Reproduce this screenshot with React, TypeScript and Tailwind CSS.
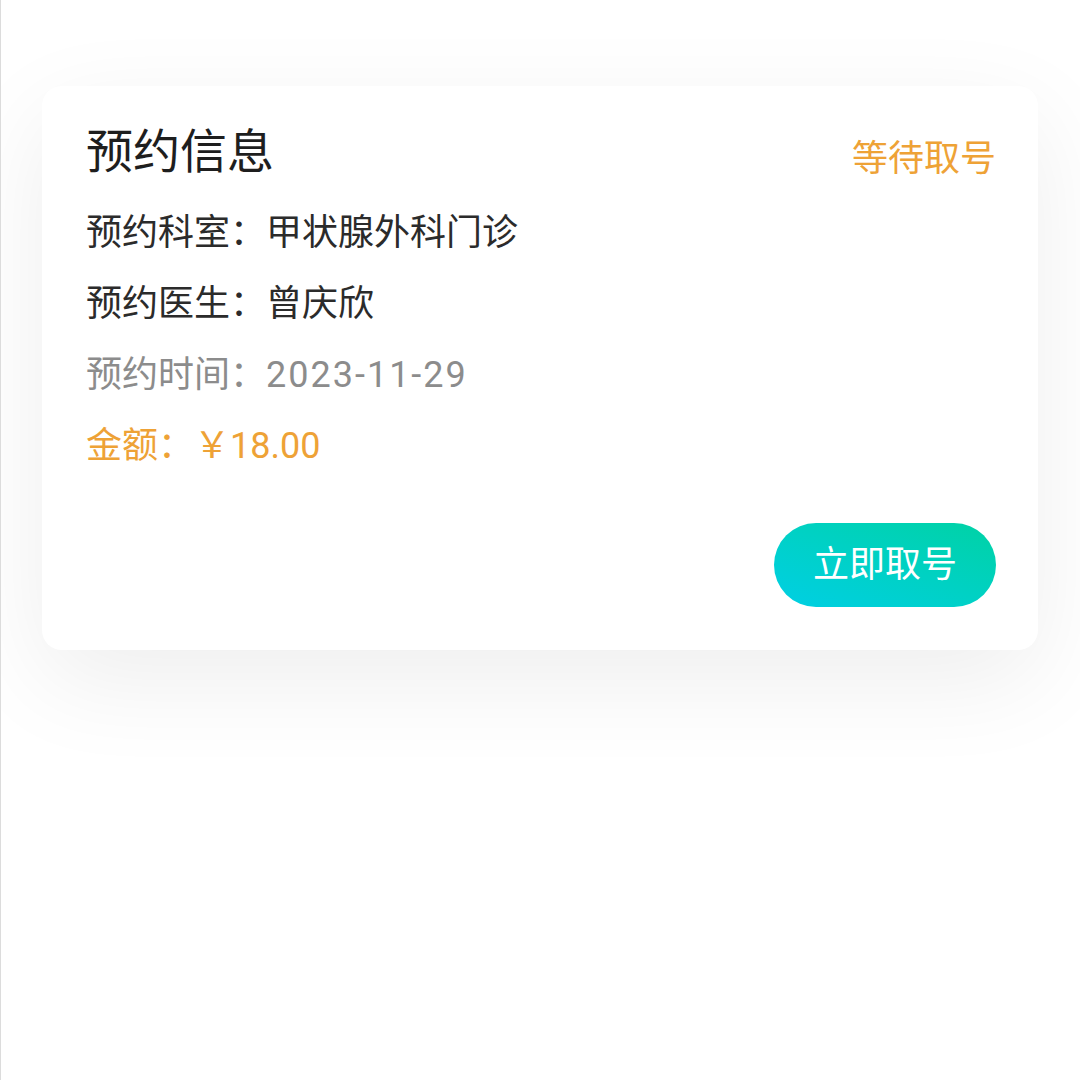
import React from "react";

export default function App() {
  const font = { fontFamily: 'Roboto, "Noto Sans CJK SC", "Noto Sans", sans-serif' };
  return (
    <div
      className="w-[1080px] h-[1080px] bg-white border-l border-[#dcdcdc] overflow-hidden"
      style={font}
    >
      <div className="pt-[86px] pl-[41px] pr-[42px]">
        <div className="bg-white rounded-[20px] h-[564px] shadow-[0_30px_100px_rgba(0,0,0,0.07)] pl-[44px] pr-[42px] flex flex-col">
          <div className="flex items-center justify-between h-[56px] mt-[38px]">
            <span className="text-[47px] leading-[56px] text-[#1e1e1e]">预约信息</span>
            <span className="text-[36px] leading-[44px] text-[#eea236] mt-[14px]">等待取号</span>
          </div>
          <div className="mt-[31px] flex flex-col gap-[27px] text-[36px] leading-[44px]">
            <div className="flex text-[#2b2b2b]">
              <span>预约科室：</span>
              <span>甲状腺外科门诊</span>
            </div>
            <div className="flex text-[#2b2b2b]">
              <span>预约医生：</span>
              <span>曾庆欣</span>
            </div>
            <div className="flex text-[#8c8c8c]">
              <span>预约时间：</span>
              <span className="tracking-[2px]">2023-11-29</span>
            </div>
            <div className="flex text-[#eea236]">
              <span>金额：</span>
              <span>￥18.00</span>
            </div>
          </div>
          <div className="flex justify-end mt-[55px]">
            <button className="w-[222px] h-[84px] rounded-full bg-gradient-to-tr from-[#00cfe4] to-[#00d2a4] text-white text-[36px] leading-none">
              立即取号
            </button>
          </div>
        </div>
      </div>
    </div>
  );
}
